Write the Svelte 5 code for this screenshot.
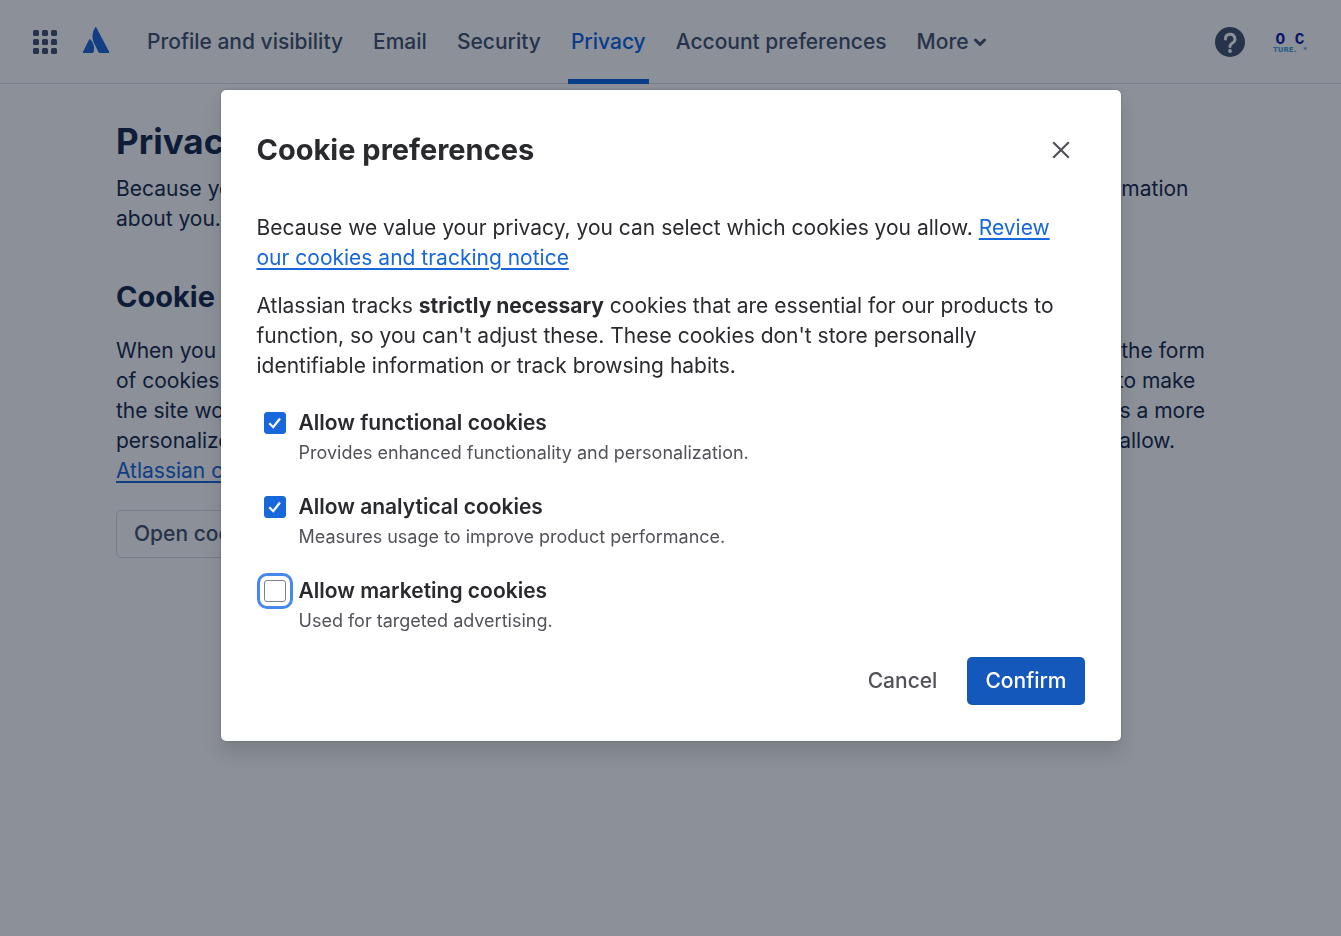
<script lang="ts">
  interface CookieOption {
    id: string;
    label: string;
    description: string;
    checked: boolean;
  }

  const navItems = ['Profile and visibility', 'Email', 'Security', 'Privacy', 'Account preferences'];
  const activeItem = 'Privacy';

  let options = $state<CookieOption[]>([
    {
      id: 'functional',
      label: 'Allow functional cookies',
      description: 'Provides enhanced functionality and personalization.',
      checked: true
    },
    {
      id: 'analytical',
      label: 'Allow analytical cookies',
      description: 'Measures usage to improve product performance.',
      checked: true
    },
    {
      id: 'marketing',
      label: 'Allow marketing cookies',
      description: 'Used for targeted advertising.',
      checked: false
    }
  ]);

  let focused = $state('marketing');
  let open = $state(true);

  function close() {
    open = false;
  }

  function handleKeydown(e: KeyboardEvent) {
    if (e.key === 'Escape') close();
  }
</script>

<svelte:window onkeydown={handleKeydown} />

<header class="topbar">
  <button aria-label="Switch to">
    <svg width="24" height="24" viewBox="0 0 24 24" fill="currentColor">
      {#each [0, 9, 18] as y}
        {#each [0, 9, 18] as x}
          <rect {x} {y} width="6" height="6" rx="1.5" />
        {/each}
      {/each}
    </svg>
  </button>
  <a class="logo" href="#home" aria-label="Atlassian">
    <svg width="28" height="30" viewBox="0 0 28 30" fill="#2068d8">
      <path d="M8.300 12.600c-.4-.5-1-.4-1.300.1L1 24.700c-.3.600.1 1.300.7 1.300h8.900c.3 0 .6-.2.7-.4 1.900-3.900.5-9.800-3-13z" />
      <path d="M13 .700C9.700 6.100 9.900 11.800 12.200 16.500l4.500 9c.1.300.4.500.8.500h8.900c.6 0 1-.6.700-1.300L14.500.700c-.3-.6-1.200-.6-1.500 0z" />
    </svg>
  </a>
  <nav aria-label="Account">
    {#each navItems as item}
      <a href="#{item}" class:active={item === activeItem}>{item}</a>
    {/each}
    <button class="more">
      More
      <svg width="14" height="10" viewBox="0 0 14 10" fill="none" stroke="currentColor" stroke-width="3" stroke-linecap="round" stroke-linejoin="round">
        <path d="M2.500 3 7 7.500 11.500 3" />
      </svg>
    </button>
  </nav>
  <div class="actions">
    <button aria-label="Help">
      <svg width="30" height="30" viewBox="0 0 30 30">
        <circle cx="15" cy="15" r="15" fill="currentColor" />
        <path d="M10.500 12a4.700 4.700 0 1 1 7 4c-1.700 1-2.500 1.600-2.500 3.600" fill="none" stroke="#fff" stroke-width="3" stroke-linecap="round" />
        <circle cx="15" cy="24" r="1.900" fill="#fff" />
      </svg>
    </button>
    <button class="avatar" aria-label="Your profile">
      <span class="initials">O C</span>
      <span class="caption"><span>TURE.</span><span>*</span></span>
    </button>
  </div>
</header>

<main>
  <h1>Privacy</h1>
  <p class="intro">
    Because your privacy is important to us, we're transparent about how we collect, use, and share information
    about you.
  </p>
  <h2>Cookie preferences</h2>
  <p>
    When you visit any Atlassian website, we can store or retrieve information on your browser, mostly in the form
    of cookies. This information might be about you, your preferences or your device and is mostly used to make
    the site work as you expect. This information doesn't usually directly identify you, but it can give users a more
    personalized web experience. We respect your privacy, so you can easily choose which cookies you allow.
    <a href="#notice">Atlassian cookies and tracking notice</a>
  </p>
  <button class="btn outlined">Open cookie preferences</button>
</main>

{#if open}
  <div class="backdrop">
    <div class="modal" role="dialog" aria-modal="true" aria-labelledby="modal-title">
      <div class="modal-header">
        <h2 id="modal-title">Cookie preferences</h2>
        <button class="close" aria-label="Close" onclick={close}>
          <svg width="18" height="18" viewBox="0 0 18 18" fill="none" stroke="currentColor" stroke-width="2.200">
            <path d="M1.200 1.200l15.600 15.600M16.800 1.200l-15.600 15.600" />
          </svg>
        </button>
      </div>
      <div class="modal-body">
        <p>
          Because we value your privacy, you can select which cookies you allow.
          <a href="#review">Review our cookies and tracking notice</a>
        </p>
        <p>
          Atlassian tracks <strong>strictly necessary</strong> cookies that are essential for our products to
          function, so you can't adjust these. These cookies don't store personally identifiable information or
          track browsing habits.
        </p>
      </div>
      <div class="options">
        {#each options as option (option.id)}
          <div class="option">
            <input
              type="checkbox"
              id={option.id}
              class:focused={focused === option.id}
              aria-describedby="{option.id}-description"
              bind:checked={option.checked}
              onfocus={() => (focused = option.id)}
              onblur={() => (focused = '')}
            />
            <svg class="tick" width="22" height="22" viewBox="0 0 22 22" fill="none" stroke="#fff" stroke-width="2.200" aria-hidden="true">
              <path d="M5.300 11.300l3.900 3.900 6.800-8.700" />
            </svg>
            <label for={option.id}>{option.label}</label>
            <p id="{option.id}-description">{option.description}</p>
          </div>
        {/each}
      </div>
      <div class="modal-actions">
        <button class="btn subtle" onclick={close}>Cancel</button>
        <button class="btn primary" onclick={close}>Confirm</button>
      </div>
    </div>
  </div>
{/if}

<style>
  :global(body) {
    margin: 0;
    background-color: #fff;
    color: #172b4d;
    font-family: Inter, 'Liberation Sans', sans-serif;
    font-size: 21px;
    line-height: 30px;
  }

  button {
    padding: 0;
    border: none;
    background: none;
    color: inherit;
    font: inherit;
    cursor: pointer;
  }

  svg {
    display: block;
  }

  h1,
  h2,
  p {
    margin: 0;
  }

  a {
    color: #1868db;
    text-underline-offset: 3px;
  }

  .topbar {
    display: flex;
    align-items: center;
    box-sizing: border-box;
    height: 84px;
    padding: 0 34px 0 33px;
    border-bottom: 1px solid #dcdfe4;
    color: #44546f;
  }

  .logo {
    margin: 0 34px 0 25px;
  }

  nav {
    display: flex;
    align-self: stretch;
    gap: 24px;
    flex: 1;
    font-weight: 500;
  }

  nav a,
  .more {
    display: flex;
    align-items: center;
    gap: 4px;
    box-sizing: border-box;
    height: 84px;
    padding: 0 3px;
    color: #44546f;
    text-decoration: none;
    white-space: nowrap;
  }

  nav a.active {
    color: #0c66e4;
    box-shadow: inset 0 -5px #0c66e4;
  }

  .actions {
    display: flex;
    align-items: center;
    gap: 28px;
  }

  .avatar {
    display: flex;
    flex-direction: column;
    align-items: center;
    width: 34px;
    padding-top: 3px;
    font-weight: 700;
  }

  .initials {
    color: #0a1fa8;
    font-family: 'Liberation Mono', monospace;
    font-size: 16px;
    line-height: 14px;
  }

  .caption {
    display: flex;
    justify-content: space-between;
    align-self: stretch;
    color: #4aa3e0;
    font-family: 'DejaVu Sans', sans-serif;
    font-size: 7px;
    line-height: 7px;
  }

  main {
    padding: 38px 116px;
  }

  h1 {
    font-size: 35px;
    font-weight: 700;
    line-height: 39px;
  }

  h2 {
    font-size: 29px;
    font-weight: 700;
    line-height: 36px;
  }

  main h2 {
    margin: 45px 0 21px;
  }

  .intro {
    margin-top: 13px;
  }

  .btn {
    height: 48px;
    padding: 0 18px;
    border-radius: 5px;
    font-weight: 500;
    white-space: nowrap;
  }

  .btn.outlined {
    margin-top: 24px;
    padding: 0 17px;
    border: 1px solid #dcdfe4;
    color: #44546f;
  }

  .btn.subtle {
    color: #505258;
  }

  .btn.primary {
    background-color: #1558bc;
    color: #fff;
  }

  .backdrop {
    position: fixed;
    inset: 0;
    padding: 90px 24px;
    background-color: rgba(5, 12, 31, 0.46);
  }

  .modal {
    box-sizing: border-box;
    max-width: 900px;
    margin: 0 auto;
    padding: 36px;
    border-radius: 5px;
    background-color: #fff;
    box-shadow: 0 12px 18px rgba(30, 31, 33, 0.15), 0 0 2px rgba(30, 31, 33, 0.31);
    color: #292a2e;
  }

  .modal-header {
    display: flex;
    align-items: center;
    justify-content: space-between;
  }

  .close {
    display: flex;
    align-items: center;
    justify-content: center;
    width: 48px;
    height: 48px;
    color: #505258;
  }

  .modal-body {
    display: flex;
    flex-direction: column;
    gap: 18px;
    margin: 39px 0 27px;
  }

  strong {
    font-weight: 700;
  }

  .options {
    display: flex;
    flex-direction: column;
    gap: 24px;
    padding-left: 7px;
  }

  .option {
    display: grid;
    grid-template-columns: 22px 1fr;
    column-gap: 13px;
    align-items: center;
  }

  .option input {
    grid-area: 1 / 1;
    appearance: none;
    width: 22px;
    height: 22px;
    margin: 0;
    border: 1px solid #7d818a;
    border-radius: 3px;
    background-color: #fff;
    outline: none;
  }

  .option input:checked {
    border-color: #1868db;
    background-color: #1868db;
  }

  .option input.focused {
    outline: 3px solid #4688ec;
    outline-offset: 4px;
  }

  .tick {
    grid-area: 1 / 1;
    z-index: 1;
    visibility: hidden;
    pointer-events: none;
  }

  input:checked + .tick {
    visibility: visible;
  }

  .option label {
    justify-self: start;
    font-weight: 600;
  }

  .option p {
    grid-column: 2;
    color: #505258;
    font-size: 18px;
  }

  .modal-actions {
    display: flex;
    justify-content: flex-end;
    gap: 12px;
    margin-top: 21px;
  }
</style>
